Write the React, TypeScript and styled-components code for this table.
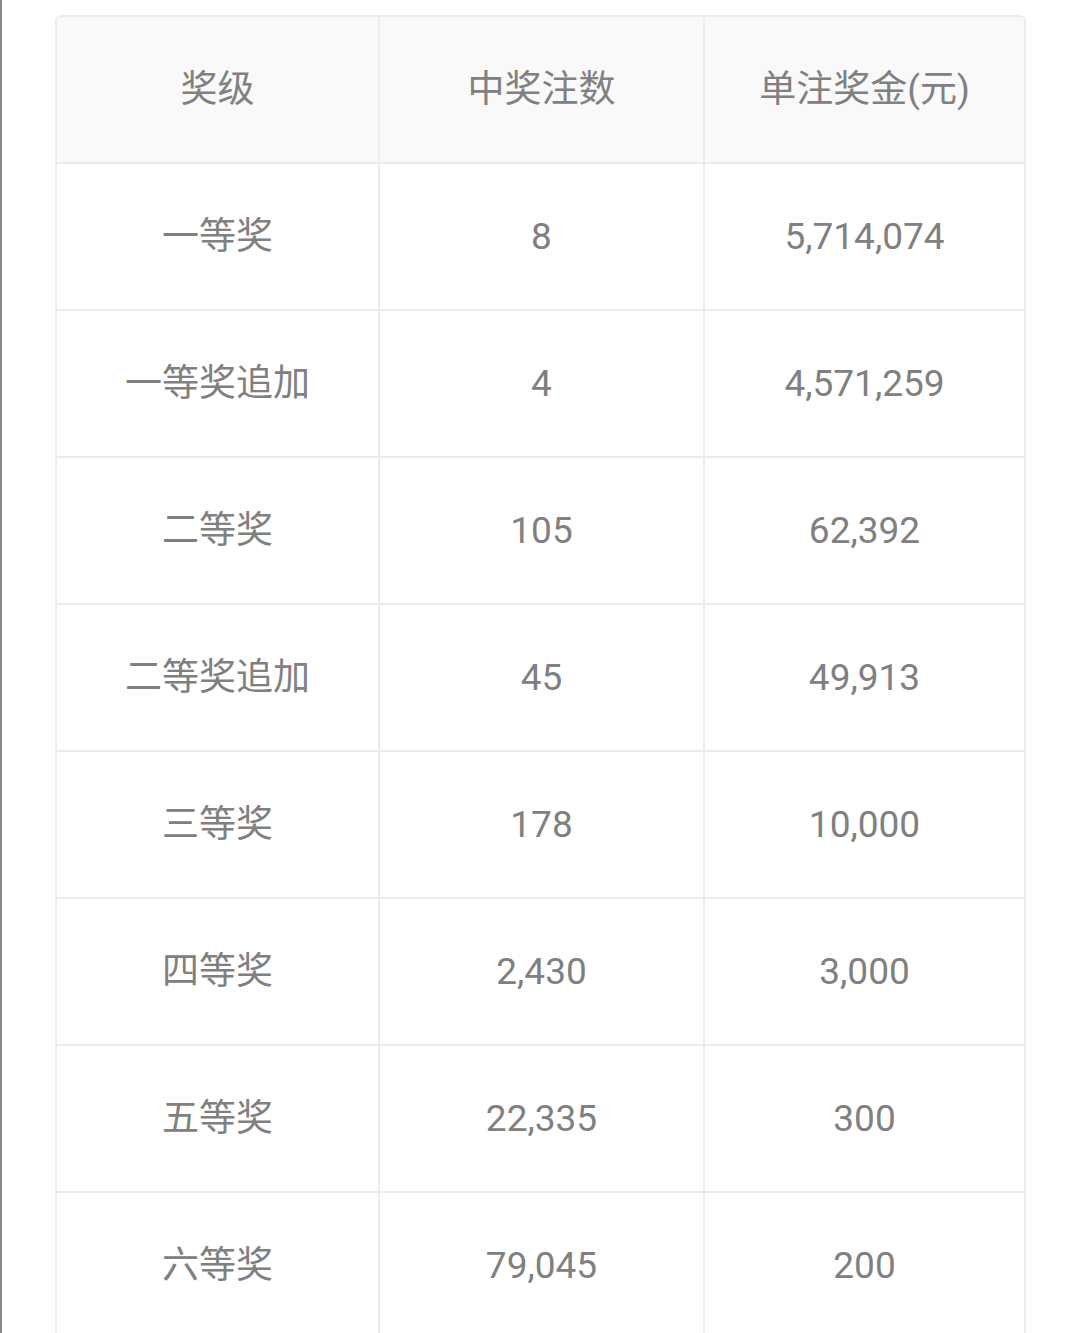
import styled, { createGlobalStyle } from "styled-components";

// colors
const borderColor = "#ececec";
const headBg = "#f9f9f9";
const textColor = "#808080";

const rows = [
  { level: "一等奖", count: "8", prize: "5,714,074" },
  { level: "一等奖追加", count: "4", prize: "4,571,259" },
  { level: "二等奖", count: "105", prize: "62,392" },
  { level: "二等奖追加", count: "45", prize: "49,913" },
  { level: "三等奖", count: "178", prize: "10,000" },
  { level: "四等奖", count: "2,430", prize: "3,000" },
  { level: "五等奖", count: "22,335", prize: "300" },
  { level: "六等奖", count: "79,045", prize: "200" },
];

const GlobalStyle = createGlobalStyle`
  html, body {
    margin: 0;
    padding: 0;
    background: #ffffff;
  }
  body {
    font-family: Roboto, "Noto Sans CJK SC", sans-serif;
  }
`;

const App = () => {
  return (
    <>
      <GlobalStyle />
      <Page>
        <Table>
          <HeadCell>奖级</HeadCell>
          <HeadCell>中奖注数</HeadCell>
          <HeadCell $last>单注奖金(元)</HeadCell>
          {rows.map((r) => (
            <Row key={r.level}>
              <Cell>{r.level}</Cell>
              <Cell>{r.count}</Cell>
              <Cell $last>{r.prize}</Cell>
            </Row>
          ))}
        </Table>
      </Page>
    </>
  );
};

const Page = styled.div`
  height: 1333px;
  overflow: hidden;
  box-sizing: border-box;
  border-left: 2px solid #888888;
  padding: 15px 0 0 53px;
`;

const Table = styled.div`
  width: 971px;
  box-sizing: border-box;
  display: grid;
  grid-template-columns: 323px 325px 1fr;
  border: 2px solid ${borderColor};
  border-radius: 6px;
  overflow: hidden;
`;

const Row = styled.div`
  display: contents;
`;

const Cell = styled.div<{ $last?: boolean }>`
  height: 147px;
  box-sizing: border-box;
  display: flex;
  align-items: center;
  justify-content: center;
  border-bottom: 2px solid ${borderColor};
  border-right: ${(p) => (p.$last ? "none" : `2px solid ${borderColor}`)};
  color: ${textColor};
  font-size: 37px;
  line-height: 1;
`;

const HeadCell = styled(Cell)`
  background: ${headBg};
`;

export default App;
